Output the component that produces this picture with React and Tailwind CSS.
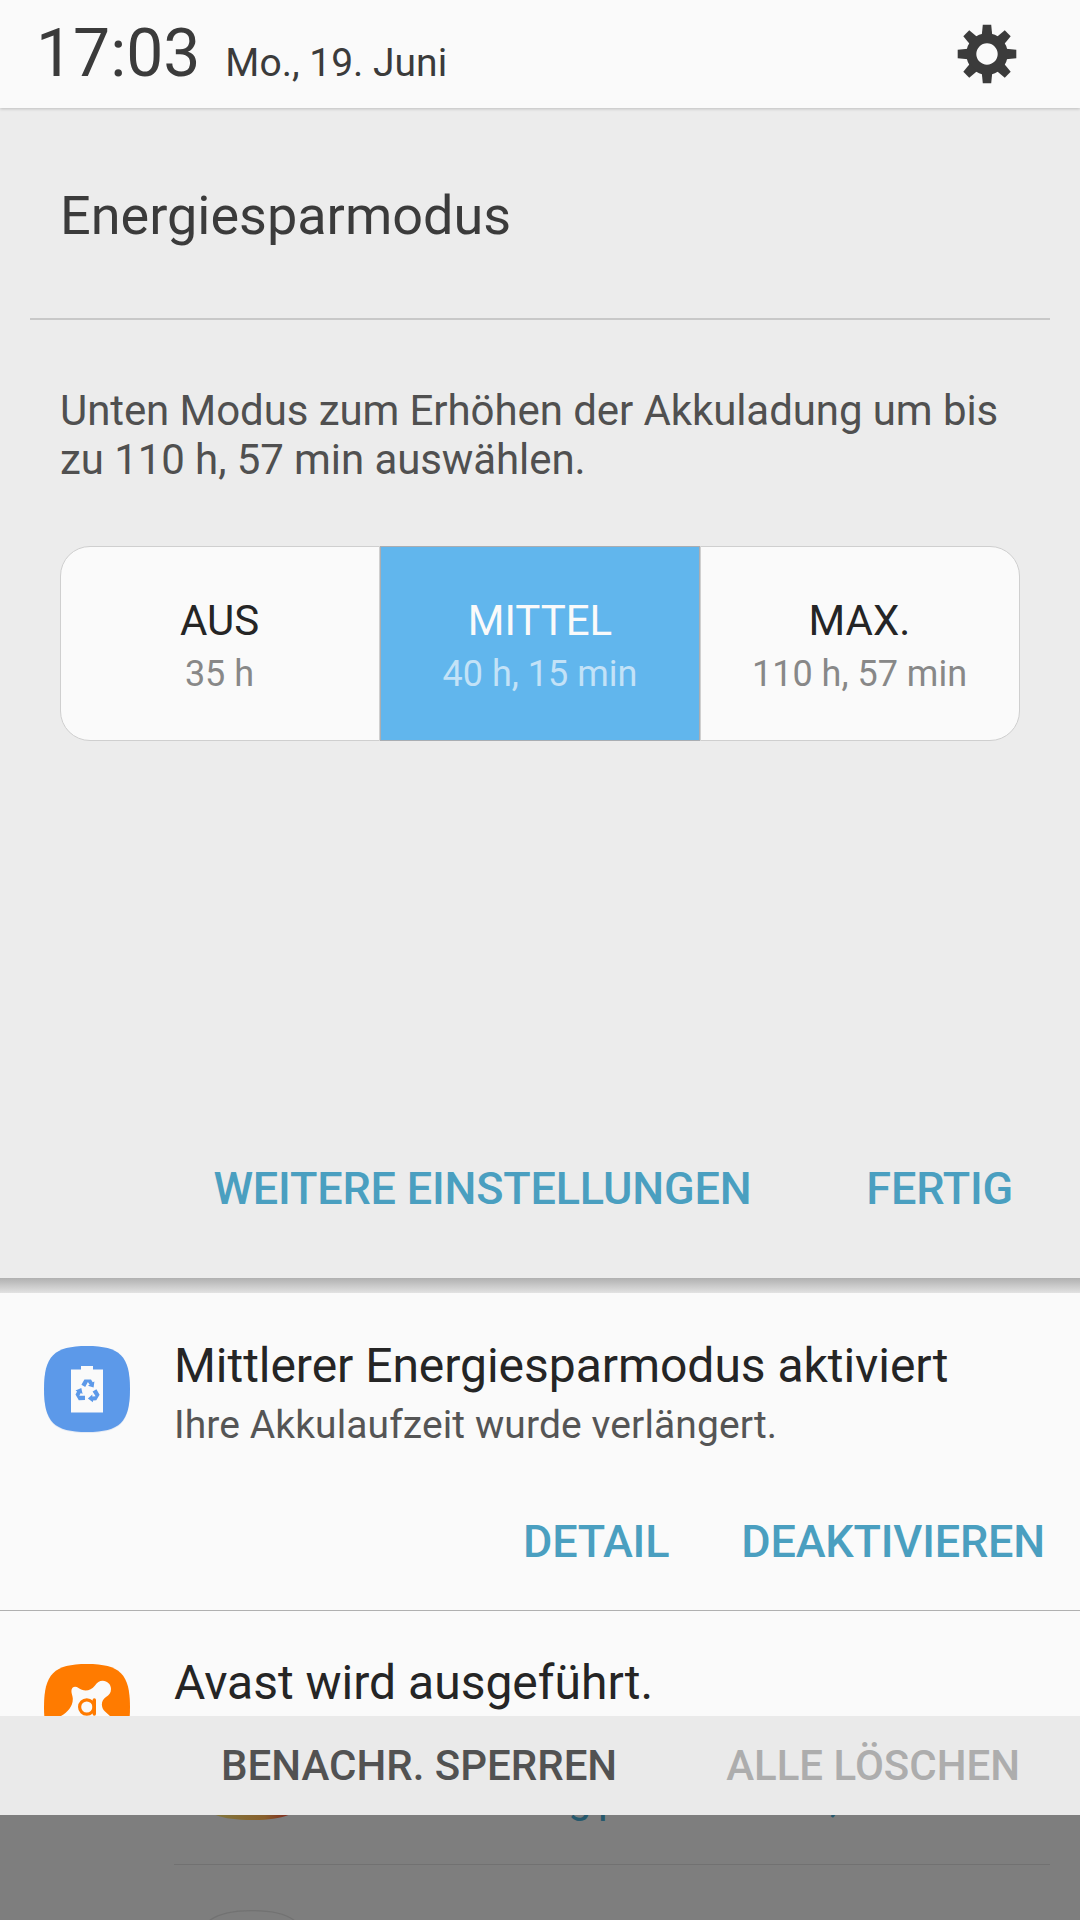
const modes = [
  { label: 'AUS', time: '35 h' },
  { label: 'MITTEL', time: '40 h, 15 min', active: true },
  { label: 'MAX.', time: '110 h, 57 min' },
];

const SQUIRCLE = 'M0 43C0 10 10 0 43 0S86 10 86 43 76 86 43 86 0 76 0 43Z';

function GearIcon() {
  return (
    <svg className="w-[60px] h-[60px]" viewBox="-30 -30 60 60">
      <circle r="15.7" fill="none" stroke="#3b3b3b" strokeWidth="10" />
      {[0, 45, 90, 135, 180, 225, 270, 315].map((angle) => (
        <path key={angle} d="M-5.2 -19L-4.2 -29.3H4.2L5.2 -19Z" fill="#3b3b3b" transform={`rotate(${angle})`} />
      ))}
    </svg>
  );
}

function BatteryIcon() {
  return (
    <svg className="w-[86px] h-[86px] shrink-0 overflow-visible" viewBox="0 0 86 86">
      <path d={SQUIRCLE} fill="#e4eaf4" transform="translate(0 1)" />
      <path d={SQUIRCLE} fill="#5c99e9" />
      <path d="M37 20H49V23.5H59V66.5H27V23.5H37Z" fill="#fafafa" />
      {/* recycling arrows */}
      {[0, 120, 240].map((angle) => (
        <path
          key={angle}
          d="M37.4 39.4L40.4 34H47L48.7 36.8L50.4 36L49.6 42.2L43.9 40.4L45.7 39.3L43.9 36.6L41.2 41.6Z"
          fill="#5c99e9"
          transform={`translate(0 -0.6) rotate(${angle} 43.6 46)`}
        />
      ))}
    </svg>
  );
}

function AvastIcon() {
  return (
    <svg className="w-[86px] h-[86px] shrink-0" viewBox="0 0 86 86">
      <path d={SQUIRCLE} fill="#ff7b00" />
      <path
        d="M27.4 27C27.4 22.6 31.5 21.4 34.5 24C39.5 27.8 46.5 27.4 51 21.5C53 18.6 55.5 16.7 58.7 16.7C63.3 16.7 67 20.3 67 25C67 29 65 31 62 33C57.2 36 56.2 43 61 47.5L66 52V70H17V52C24 48 29 42 28.8 34.5C28.7 32 27.4 29.5 27.4 27Z"
        fill="#fafafa"
      />
      <circle cx="42.8" cy="43" r="7.2" fill="none" stroke="#ff7b00" strokeWidth="3.2" />
      <path d="M50.3 36V50" stroke="#ff7b00" strokeWidth="3.4" strokeLinecap="round" />
    </svg>
  );
}

function Header() {
  return (
    <header className="relative z-10 flex h-[108px] items-start justify-between bg-[#fafafa] pl-9 pr-[63px] text-[#3b3b3b] shadow-[0_1px_3px_rgba(0,0,0,0.2)]">
      <div className="flex items-baseline pt-[21px]">
        <span className="text-[66px] leading-none">17:03</span>
        <span className="ml-[25px] text-[39px] leading-none">Mo., 19. Juni</span>
      </div>
      <div className="pt-6">
        <GearIcon />
      </div>
    </header>
  );
}

function ModeSelector() {
  return (
    <div className="mx-[60px] mt-[62px] grid h-[195px] grid-cols-3">
      {modes.map((mode) => (
        <button
          key={mode.label}
          className={
            mode.active
              ? 'flex flex-col items-center border border-[#a9adb2] bg-[#61b6ed] pt-[53px] text-[#fafafa]'
              : 'flex flex-col items-center border border-[#cfcfcf] bg-[#fafafa] pt-[53px] pr-px text-[#252525] first:rounded-l-[30px] last:rounded-r-[30px]'
          }
        >
          <span className="text-[42px] leading-none">{mode.label}</span>
          <span className={mode.active ? 'mt-[14px] text-[36px] leading-none text-[#c3e2f7]' : 'mt-[14px] text-[36px] leading-none text-[#888888]'}>
            {mode.time}
          </span>
        </button>
      ))}
    </div>
  );
}

function PowerPanel() {
  return (
    <section className="h-[1170px] bg-[#ececec]">
      <div className="mx-[30px] h-[212px] border-b-2 border-[#c8c8c8] px-[30px] pt-[81px]">
        <h1 className="text-[54px] leading-none text-[#3b3b3b]">Energiesparmodus</h1>
      </div>
      <p className="mx-[60px] mt-[66px] whitespace-nowrap text-[42px] leading-[49px] tracking-[-0.08px] text-[#505050]">
        Unten Modus zum Erhöhen der Akkuladung um bis
        <br />
        zu 110 h, 57 min auswählen.
      </p>
      <ModeSelector />
      <div className="mt-[425px] flex justify-end gap-[115px] pr-[67px] text-[45px] font-medium leading-none tracking-[-0.2px] text-[#4a9fc0]">
        <button>WEITERE EINSTELLUNGEN</button>
        <button>FERTIG</button>
      </div>
    </section>
  );
}

function Notifications() {
  return (
    <section className="h-[423px] overflow-hidden bg-[#fafafa]">
      <div className="h-[318px] border-b border-[#b0b0b0]">
        <div className="flex pl-[44px] pt-[53px]">
          <BatteryIcon />
          <div className="-mt-1 ml-[44px] h-[90px] whitespace-nowrap">
            <h2 className="text-[48px] leading-none tracking-[-0.04px] text-[#252525]">Mittlerer Energiesparmodus aktiviert</h2>
            <p className="mt-4 text-[39px] leading-none tracking-[0.1px] text-[#555555]">Ihre Akkulaufzeit wurde verlängert.</p>
          </div>
        </div>
        <div className="mt-[87px] flex justify-end gap-[72px] pr-[35px] text-[45px] font-medium leading-none tracking-[-0.2px] text-[#4a9fc0]">
          <button>DETAIL</button>
          <button>DEAKTIVIEREN</button>
        </div>
      </div>
      <div className="flex pl-[44px] pt-[53px]">
        <AvastIcon />
        <h2 className="-mt-[5px] ml-[44px] text-[48px] leading-none text-[#252525]">Avast wird ausgeführt.</h2>
      </div>
    </section>
  );
}

function ActionBar() {
  return (
    <footer className="flex h-[99px] items-start justify-end gap-[109px] bg-[#eaeaea] pr-[60px] pt-[29px] text-[42px] font-medium leading-none text-[#525252]">
      <button>BENACHR. SPERREN</button>
      <button className="text-[#adadad]">ALLE LÖSCHEN</button>
    </footer>
  );
}

// settings list behind the shade, dimmed
function DimmedList() {
  return (
    <div className="relative h-[105px] overflow-hidden bg-[#7e7e7e]">
      <svg className="absolute left-[189px] -top-[121px] w-[126px] h-[126px]" viewBox="0 0 86 86">
        <defs>
          <linearGradient id="dimIcon">
            <stop offset="0.25" stopColor="#82743c" />
            <stop offset="0.6" stopColor="#875f2c" />
            <stop offset="0.8" stopColor="#80281f" />
          </linearGradient>
        </defs>
        <path d={SQUIRCLE} fill="url(#dimIcon)" />
      </svg>
      <span className="absolute left-[568px] -top-[38px] text-[42px] leading-none text-[#26596d]">g</span>
      <span className="absolute left-[598px] -top-[38px] text-[42px] leading-none text-[#26596d]">p</span>
      <span className="absolute left-[830px] -top-[38px] text-[42px] leading-none text-[#26596d]">,</span>
      <div className="ml-[174px] mr-[30px] mt-[49px] h-px bg-[#717171]" />
      <svg className="absolute left-[195px] top-[95px] w-[114px] h-[114px]" viewBox="0 0 86 86">
        <path d={SQUIRCLE} fill="none" stroke="#727272" strokeWidth="0.9" transform="translate(0 0.5)" />
      </svg>
    </div>
  );
}

export default function App() {
  return (
    <div className="flex h-[1920px] w-[1080px] flex-col overflow-hidden font-['Roboto',sans-serif]">
      <Header />
      <PowerPanel />
      <div className="h-[15px] bg-gradient-to-b from-[#b0b0b0] to-[#e2e2e2]" />
      <Notifications />
      <ActionBar />
      <DimmedList />
    </div>
  );
}
